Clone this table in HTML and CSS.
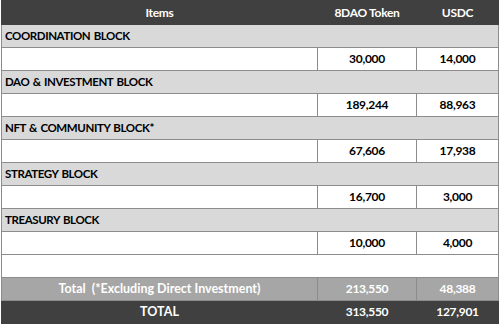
FILE: index.html
```html
<!DOCTYPE html>
<html>
<head>
<meta charset="utf-8">
<link rel="stylesheet" href="styles.css">
</head>
<body>
<table class="budget">
  <colgroup>
    <col class="c-item">
    <col class="c-token">
    <col class="c-usdc">
  </colgroup>
  <thead>
    <tr class="head">
      <th>Items</th>
      <th>8DAO Token</th>
      <th>USDC</th>
    </tr>
  </thead>
  <tbody>
    <tr class="section"><td colspan="3">COORDINATION BLOCK</td></tr>
    <tr class="values"><td></td><td class="num">30,000</td><td class="num">14,000</td></tr>
    <tr class="section"><td colspan="3">DAO &amp; INVESTMENT BLOCK</td></tr>
    <tr class="values"><td></td><td class="num">189,244</td><td class="num">88,963</td></tr>
    <tr class="section"><td colspan="3">NFT &amp; COMMUNITY BLOCK*</td></tr>
    <tr class="values"><td></td><td class="num">67,606</td><td class="num">17,938</td></tr>
    <tr class="section"><td colspan="3">STRATEGY BLOCK</td></tr>
    <tr class="values"><td></td><td class="num">16,700</td><td class="num">3,000</td></tr>
    <tr class="section"><td colspan="3">TREASURY BLOCK</td></tr>
    <tr class="values"><td></td><td class="num">10,000</td><td class="num">4,000</td></tr>
    <tr class="blank"><td colspan="3"></td></tr>
    <tr class="subtotal"><td>Total&nbsp; (*Excluding Direct Investment)</td><td class="num">213,550</td><td class="num">48,388</td></tr>
    <tr class="grand"><td>TOTAL</td><td class="num">313,550</td><td class="num">127,901</td></tr>
  </tbody>
</table>
</body>
</html>
```
FILE: styles.css
```css
html, body {
  margin: 0;
  padding: 0;
  background: #ffffff;
}
body {
  padding: 0 0 0 1px;
  font-family: Lato, "Open Sans", "Liberation Sans", sans-serif;
  font-weight: 700;
  font-size: 12.5px;
  color: #000;
}
.budget {
  border-collapse: collapse;
  table-layout: fixed;
  width: 497px;
}
.c-item { width: 316px; }
.c-token { width: 99px; }
.c-usdc { width: 82px; }
.budget th, .budget td {
  border: 1px solid #8c8c8c;
  height: 22px;
  padding: 0 3px;
  line-height: 14px;
  white-space: nowrap;
  overflow: hidden;
}
.head th {
  background: #404040;
  color: #ffffff;
  text-align: center;
  font-weight: 700;
  font-size: 12px;
  letter-spacing: -0.3px;
  height: 23px;
  border-color: #404040;
}
.section td {
  background: #d9d9d9;
  text-align: left;
  font-size: 11.5px;
  letter-spacing: -0.4px;
  word-spacing: 1px;
}
.values td {
  background: #ffffff;
  text-align: center;
}
.blank td { background: #ffffff; }
.subtotal td {
  background: #a6a6a6;
  color: #ffffff;
  text-align: center;
}
.grand td {
  background: #404040;
  color: #ffffff;
  text-align: center;
  border-color: #404040;
}
.budget .num {
  font-size: 12px;
  letter-spacing: -0.3px;
}
```
